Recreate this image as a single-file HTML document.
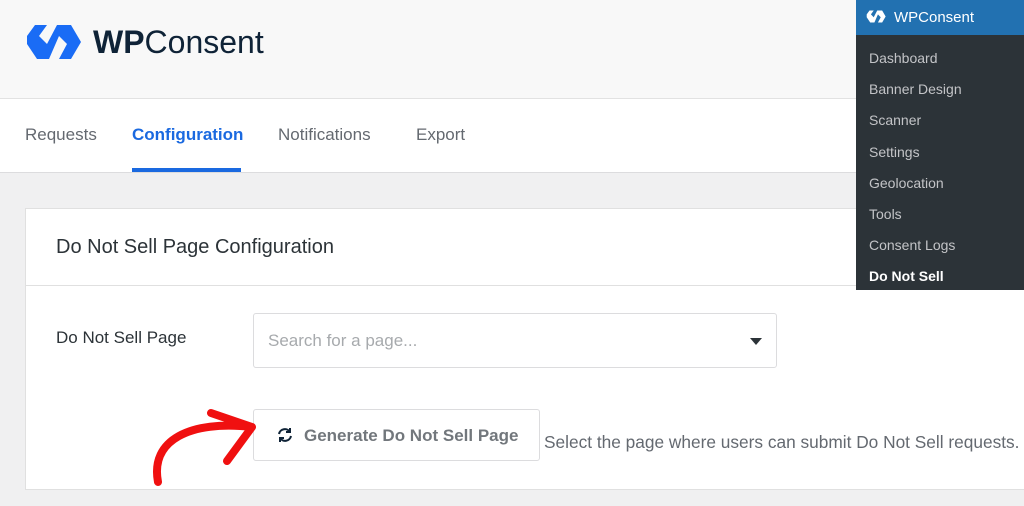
<!DOCTYPE html>
<html><head><style>
*{margin:0;padding:0;box-sizing:border-box}
body{width:1024px;height:506px;overflow:hidden;background:#f0f0f1;font-family:"Liberation Sans","DejaVu Sans",sans-serif;position:relative}
.hdr{position:absolute;left:0;top:0;width:1024px;height:99px;background:#f8f8f8;border-bottom:1px solid #e2e2e2}
.logo{position:absolute;left:93px;top:24px;font-size:32px;color:#0f2337;letter-spacing:0}
.tabs{position:absolute;left:0;top:99px;width:1024px;height:74px;background:#fff;border-bottom:1px solid #dcdcde}
.tab{position:absolute;top:26px;font-size:17px;color:#646970}
.tab.a{color:#1a69e0;font-weight:bold}
.ul{position:absolute;left:132px;top:168px;width:109px;height:4px;background:#1a69e0}
.card{position:absolute;left:25px;top:208px;width:1010px;height:282px;background:#fff;border:1px solid #e0e0e0}
.ch{height:77px;border-bottom:1px solid #e0e0e0;padding:27px 0 0 30px;font-size:20px;color:#2c3338}
.lbl{position:absolute;left:30px;top:119px;font-size:17px;color:#2c3338}
.sel{position:absolute;left:227px;top:104px;width:524px;height:55px;border:1px solid #dcdcde;border-radius:3px;font-size:17px;color:#a7aaad;padding:17px 14px}
.sel:after{content:"";position:absolute;right:14px;top:24px;border:6px solid transparent;border-top:7px solid #2c3338;border-bottom:0}
.btn{position:absolute;left:227px;top:200px;width:287px;height:52px;border:1px solid #dcdcde;border-radius:3px;font-size:17px;font-weight:bold;color:#72777c;padding:16px 0 0 50px;white-space:nowrap}
.hint{position:absolute;left:518px;top:223px;font-size:17.3px;color:#646970;white-space:nowrap}
.menu{position:absolute;left:856px;top:0;width:168px;height:290px;background:#2c3338}
.mh{height:35px;background:#2271b1;color:#fff;font-size:15px;padding:9px 0 0 38px}
.mi{position:absolute;left:13px;font-size:14px;color:#c3c4c7}
</style></head><body>
<div class="hdr">
<svg style="position:absolute;left:25px;top:22px" width="57" height="40" viewBox="0 0 57 40"><path fill="#1a6cf5" d="M2 14 L10 3 H22 L14 14 L22 22 L32 3 H46 L56 20 L46 37 H34 L42 22 L34 14 L24 37 H12 L2 22 Z"/></svg>
<div class="logo"><b>WP</b>Consent</div>
</div>
<div class="tabs">
<div class="tab" style="left:25px">Requests</div>
<div class="tab a" style="left:132px">Configuration</div>
<div class="tab" style="left:278px">Notifications</div>
<div class="tab" style="left:416px">Export</div>
</div>
<div class="ul"></div>
<div class="card">
<div class="ch">Do Not Sell Page Configuration</div>
<div class="lbl">Do Not Sell Page</div>
<div class="sel">Search for a page...</div>
<div class="btn"><svg style="position:absolute;left:22px;top:17px" width="18" height="16" viewBox="0 0 18 16" fill="none" stroke="#0f2337" stroke-width="2"><path d="M3 7 A6 6 0 0 1 14 5"/><path d="M15 9 A6 6 0 0 1 4 11"/><path d="M14 1 V5 H10" /><path d="M4 15 V11 H8"/></svg>Generate Do Not Sell Page</div>
<div class="hint">Select the page where users can submit Do Not Sell requests.</div>
</div>
<svg style="position:absolute;left:0;top:0" width="300" height="506"><path d="M158 482 C150 440 190 420 252 427 M211 413 L252 427 L227 461" fill="none" stroke="#f01010" stroke-width="8" stroke-linecap="round" stroke-linejoin="round"/></svg>
<div class="menu">
<div class="mh"><svg style="position:absolute;left:10px;top:9px" width="20" height="15" viewBox="0 0 57 40"><path fill="#fff" d="M2 14 L10 3 H22 L14 14 L22 22 L32 3 H46 L56 20 L46 37 H34 L42 22 L34 14 L24 37 H12 L2 22 Z"/></svg>WPConsent</div>
<div class="mi" style="top:50px">Dashboard</div>
<div class="mi" style="top:81px">Banner Design</div>
<div class="mi" style="top:112px">Scanner</div>
<div class="mi" style="top:144px">Settings</div>
<div class="mi" style="top:175px">Geolocation</div>
<div class="mi" style="top:206px">Tools</div>
<div class="mi" style="top:237px">Consent Logs</div>
<div class="mi" style="top:268px;color:#fff;font-weight:bold">Do Not Sell</div>
</div>
</body></html>
